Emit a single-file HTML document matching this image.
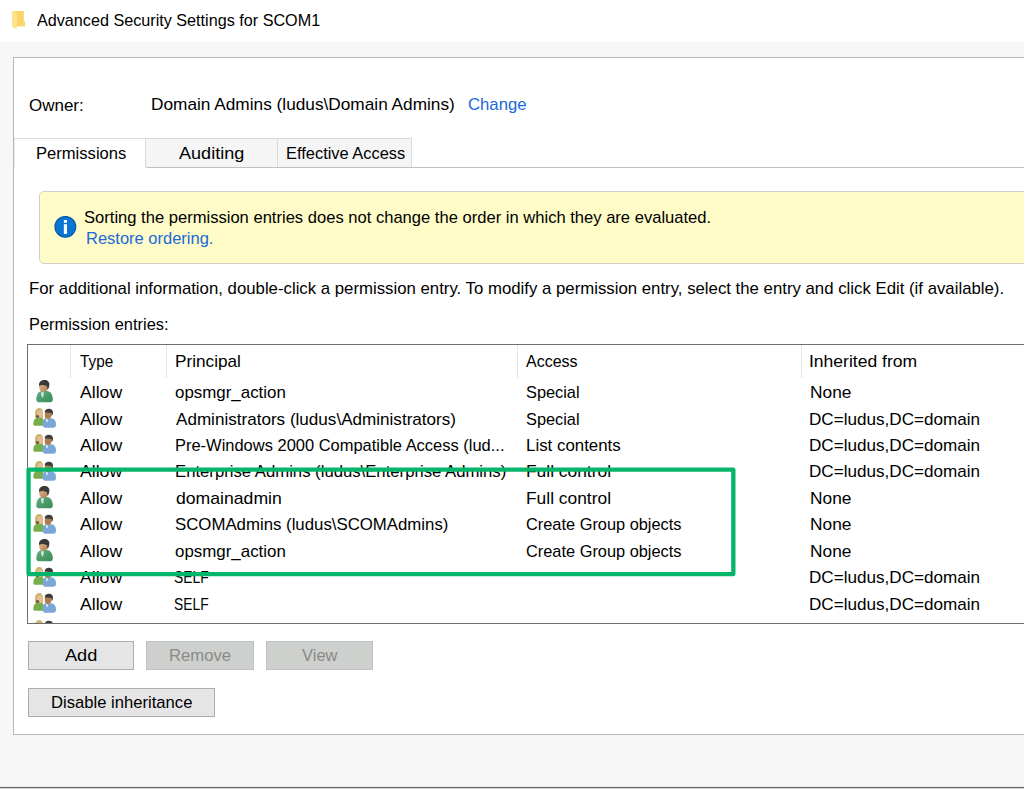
<!DOCTYPE html>
<html><head><meta charset="utf-8">
<style>
html,body{margin:0;padding:0;}
body{width:1024px;height:791px;overflow:hidden;position:relative;background:#f7f7f7;font-family:"Liberation Sans",sans-serif;color:#000;}
.a{position:absolute;}
.t{position:absolute;white-space:nowrap;font-size:17px;line-height:20px;transform-origin:0 0;}
.lnk{color:#1a6ad8;}
#titlebar{left:0;top:0;width:1024px;height:42px;background:#fff;}
#panel{left:13px;top:57px;width:1020px;height:678px;background:#fff;border:1px solid #b4b9b4;box-sizing:border-box;}
.tab{position:absolute;top:138px;height:30px;box-sizing:border-box;border-top:1px solid #dadada;}
#yellow{left:39px;top:191px;width:1000px;height:73px;background:#fffcc8;border:1px solid #d0d0c8;border-radius:5px;box-sizing:border-box;}
#list{left:27px;top:344px;width:1010px;height:280px;background:#fff;border:1px solid #6e6e6e;box-sizing:border-box;overflow:hidden;}
.sep{position:absolute;top:345px;width:1px;height:33px;background:#e5e5e5;}
.btn{position:absolute;box-sizing:border-box;border:1px solid #adadad;background:#e5e5e5;}
.dis{background:#cdd0cd;border-color:#bfc3bf;}
.dtxt{color:#8a8a8a;}
</style></head><body>
<svg width="0" height="0" style="position:absolute">
 <defs>
  <linearGradient id="gb" x1="0" y1="0" x2="1" y2="1"><stop offset="0" stop-color="#62ae7e"/><stop offset="1" stop-color="#3a8a5a"/></linearGradient>
  <linearGradient id="sk" x1="0" y1="0" x2="1" y2="1"><stop offset="0" stop-color="#e4bc93"/><stop offset="1" stop-color="#b27c4e"/></linearGradient>
  <symbol id="usr" viewBox="0 0 17 23">
   <path d="M0.3,19.5 C0.3,14.5 2.5,11.5 6,11 L11,11 C14.5,11.5 16.8,14.5 16.8,19.5 C16.8,21.5 15.5,22.3 13.5,22.3 L3.5,22.3 C1.5,22.3 0.3,21.5 0.3,19.5Z" fill="url(#gb)"/>
   <polygon points="5,12 8,12.5 7,18 5.3,16" fill="#cfe6e6"/>
   <ellipse cx="7.5" cy="7" rx="4.4" ry="4.9" fill="url(#sk)"/>
   <path d="M3,5 C3,1.5 5.5,0 8.5,0 C11.5,0 13.5,1.8 13.4,4.5 C13.3,7 12.5,9 11.5,10 L11,6 C9,5.5 6,4 3.3,6 Z" fill="#3a3a3a"/>
  </symbol>
  <symbol id="grp" viewBox="0 0 23 20">
   <path d="M0.3,16 C0.3,12 2,10 4.5,9.8 L9,9.8 C10,10.5 10.5,12 10.5,17.7 L2,17.7 C0.8,17.7 0.3,17 0.3,16 Z" fill="#76ae4a"/>
   <path d="M2,6 C2,2 3.8,0 6.3,0 C8.8,0 10,2 10,5 L10,10 L3,10 C2.3,9 2,8 2,6Z" fill="#cbb56e"/>
   <ellipse cx="7" cy="6.2" rx="2.9" ry="3.8" fill="#e6bd96"/>
   <ellipse cx="4.5" cy="8.5" rx="1.8" ry="1.5" fill="#7b5b36"/>
   <path d="M9.5,15 C9.5,12 11,10.3 13.5,10.3 L18.5,10.3 C21.5,10.8 23,13 23,16.5 C23,18.8 22,19.7 20,19.7 L12,19.7 C10.5,19.7 9.5,18 9.5,15Z" fill="#7ba7d6"/>
   <polygon points="13,11 15,11.5 14.5,14.5 13.2,13.5" fill="#dcefff"/>
   <ellipse cx="15" cy="7" rx="3.3" ry="4" fill="#b37c4c"/>
   <path d="M11.8,4.3 C11.8,1.5 14,0.7 16,0.7 C18.5,0.7 20,2.2 20,4.5 C20,6.5 19.3,7.5 18.7,8.2 L18.2,5 C16,4.5 13.5,4 11.8,4.8Z" fill="#3c3c3c"/>
  </symbol>
 </defs>
</svg>
<div class="a" id="titlebar"></div>
<!-- folder icon -->
<svg class="a" style="left:12px;top:11px" width="14" height="19" viewBox="0 0 14 19">
  <rect x="1.5" y="0" width="10.3" height="15.4" fill="#f8d46a"/>
  <rect x="11.5" y="9.9" width="1.6" height="5.5" fill="#fbd972"/>
  <polygon points="0,0 2.2,0 4.8,3.2 4.8,18 0,16" fill="#fce48c"/>
</svg>

<div class="a" id="panel"></div>

<!-- tabs -->
<div class="a" style="left:14px;top:138px;width:398px;height:1px;background:#dadada"></div>
<div class="a" style="left:146px;top:167px;width:878px;height:1px;background:#bfc3bf"></div>
<div class="a" style="left:14px;top:139px;width:1px;height:29px;background:#ececec"></div>
<div class="a" style="left:145px;top:139px;width:132px;height:28px;background:#f5f5f5;border-left:1px solid #dadada;box-sizing:border-box"></div>
<div class="a" style="left:277px;top:139px;width:135px;height:28px;background:#f5f5f5;border-left:1px solid #dadada;border-right:1px solid #dadada;box-sizing:border-box"></div>

<!-- info bar -->
<div class="a" id="yellow"></div>
<svg class="a" style="left:54px;top:216px" width="23" height="23" viewBox="0 0 23 23">
  <circle cx="11.35" cy="10.85" r="10.4" fill="#0a76d4" stroke="#0657a8" stroke-width="1.1"/>
  <rect x="9.85" y="4" width="3.15" height="2.8" fill="#fff"/>
  <rect x="9.85" y="8.2" width="3.15" height="9.7" fill="#fff"/>
</svg>


<!-- list -->
<div class="a" id="list"></div>
<div class="sep" style="left:70px"></div>
<div class="sep" style="left:166px"></div>
<div class="sep" style="left:517px"></div>
<div class="sep" style="left:801px"></div>


<!-- buttons -->
<div class="btn" style="left:28px;top:641px;width:106px;height:29px"></div>
<div class="btn dis" style="left:146px;top:641px;width:108px;height:29px"></div>
<div class="btn dis" style="left:266px;top:641px;width:107px;height:29px"></div>
<div class="btn" style="left:28px;top:688px;width:187px;height:29px"></div>

<div class="a" style="left:0;top:786px;width:1024px;height:1px;background:#e6e6e6"></div>
<div class="a" style="left:0;top:787px;width:1024px;height:1px;background:#6d6d6d"></div>
<div class="a" style="left:0;top:788px;width:1024px;height:1px;background:#d0d0d0"></div>
<div class="a" style="left:0;top:789px;width:1024px;height:2px;background:#fff"></div>

<div class="t" id="title" style="left:36.93px;top:11px;transform:scaleX(0.9513)">Advanced Security Settings for SCOM1</div>
<div class="t" id="owner" style="left:29.01px;top:96px;transform:scaleX(0.9983)">Owner:</div>
<div class="t" id="domain" style="left:150.76px;top:95px;transform:scaleX(1.0144)">Domain Admins (ludus\Domain Admins)</div>
<div class="t lnk" id="change" style="left:468.11px;top:95px;transform:scaleX(0.9833)">Change</div>
<div class="t" id="tperm" style="left:35.66px;top:144px;transform:scaleX(0.9754)">Permissions</div>
<div class="t" id="taud" style="left:179.25px;top:144px;transform:scaleX(1.0639)">Auditing</div>
<div class="t" id="teff" style="left:285.84px;top:144px;transform:scaleX(0.9662)">Effective Access</div>
<div class="t" id="sort" style="left:83.76px;top:208px;transform:scaleX(0.9745)">Sorting the permission entries does not change the order in which they are evaluated.</div>
<div class="t lnk" id="restore" style="left:86.16px;top:229px;transform:scaleX(0.9698)">Restore ordering.</div>
<div class="t" id="forinfo" style="left:29.11px;top:279px;transform:scaleX(0.9866)">For additional information, double-click a permission entry. To modify a permission entry, select the entry and click Edit (if available).</div>
<div class="t" id="pent" style="left:29.15px;top:315px;transform:scaleX(0.9653)">Permission entries:</div>
<div class="t" id="hType" style="left:80.45px;top:352px;transform:scaleX(0.8991)">Type</div>
<div class="t" id="hPrin" style="left:175.01px;top:352px;transform:scaleX(1.0112)">Principal</div>
<div class="t" id="hAcc" style="left:526.45px;top:352px;transform:scaleX(0.9420)">Access</div>
<div class="t" id="hInh" style="left:809.31px;top:352px;transform:scaleX(1.0302)">Inherited from</div>
<div class="t" id="add" style="left:64.75px;top:646px;transform:scaleX(1.0692)">Add</div>
<div class="t dtxt" id="remove" style="left:168.85px;top:646px;transform:scaleX(0.9808)">Remove</div>
<div class="t dtxt" id="view" style="left:302.45px;top:646px;transform:scaleX(0.9710)">View</div>
<div class="t" id="disable" style="left:50.82px;top:693px;transform:scaleX(0.9778)">Disable inheritance</div>
<div class="a" id="rows" style="left:28px;top:345px;width:996px;height:278px;overflow:hidden">
<svg class="a" style="left:8px;top:35px" width="17" height="23"><use href="#usr"/></svg>
<svg class="a" style="left:5px;top:63px" width="23" height="20"><use href="#grp"/></svg>
<svg class="a" style="left:5px;top:89px" width="23" height="20"><use href="#grp"/></svg>
<svg class="a" style="left:5px;top:116px" width="23" height="20"><use href="#grp"/></svg>
<svg class="a" style="left:8px;top:141px" width="17" height="23"><use href="#usr"/></svg>
<svg class="a" style="left:5px;top:169px" width="23" height="20"><use href="#grp"/></svg>
<svg class="a" style="left:8px;top:194px" width="17" height="23"><use href="#usr"/></svg>
<svg class="a" style="left:5px;top:222px" width="23" height="20"><use href="#grp"/></svg>
<svg class="a" style="left:5px;top:248px" width="23" height="20"><use href="#grp"/></svg>
<svg class="a" style="left:5px;top:275px" width="23" height="20"><use href="#grp"/></svg>
<div class="t" id="r0allow" style="left:51.61px;top:38px;transform:scaleX(1.0385)">Allow</div>
<div class="t" id="r0p" style="left:146.75px;top:38px;transform:scaleX(0.9941)">opsmgr_action</div>
<div class="t" id="r0a" style="left:498.16px;top:38px;transform:scaleX(0.9610)">Special</div>
<div class="t" id="r0i" style="left:782.35px;top:38px;transform:scaleX(1.0182)">None</div>
<div class="t" id="r1allow" style="left:51.61px;top:65px;transform:scaleX(1.0385)">Allow</div>
<div class="t" id="r1p" style="left:148.10px;top:65px;transform:scaleX(1.0046)">Administrators (ludus\Administrators)</div>
<div class="t" id="r1a" style="left:498.16px;top:65px;transform:scaleX(0.9610)">Special</div>
<div class="t" id="r1i" style="left:781.26px;top:65px;transform:scaleX(1.0061)">DC=ludus,DC=domain</div>
<div class="t" id="r2allow" style="left:51.61px;top:91px;transform:scaleX(1.0385)">Allow</div>
<div class="t" id="r2p" style="left:147.10px;top:91px;transform:scaleX(0.9686)">Pre-Windows 2000 Compatible Access (lud...</div>
<div class="t" id="r2a" style="left:498.04px;top:91px;transform:scaleX(0.9924)">List contents</div>
<div class="t" id="r2i" style="left:781.26px;top:91px;transform:scaleX(1.0061)">DC=ludus,DC=domain</div>
<div class="t" id="r3allow" style="left:51.61px;top:117px;transform:scaleX(1.0385)">Allow</div>
<div class="t" id="r3p" style="left:147.10px;top:117px;transform:scaleX(0.9821)">Enterprise Admins (ludus\Enterprise Admins)</div>
<div class="t" id="r3a" style="left:498.03px;top:117px;transform:scaleX(1.0225)">Full control</div>
<div class="t" id="r3i" style="left:781.26px;top:117px;transform:scaleX(1.0061)">DC=ludus,DC=domain</div>
<div class="t" id="r4allow" style="left:51.61px;top:144px;transform:scaleX(1.0385)">Allow</div>
<div class="t" id="r4p" style="left:147.52px;top:144px;transform:scaleX(1.0368)">domainadmin</div>
<div class="t" id="r4a" style="left:498.03px;top:144px;transform:scaleX(1.0225)">Full control</div>
<div class="t" id="r4i" style="left:782.35px;top:144px;transform:scaleX(1.0182)">None</div>
<div class="t" id="r5allow" style="left:51.61px;top:170px;transform:scaleX(1.0385)">Allow</div>
<div class="t" id="r5p" style="left:147.07px;top:170px;transform:scaleX(0.9878)">SCOMAdmins (ludus\SCOMAdmins)</div>
<div class="t" id="r5a" style="left:498.13px;top:170px;transform:scaleX(0.9624)">Create Group objects</div>
<div class="t" id="r5i" style="left:782.35px;top:170px;transform:scaleX(1.0182)">None</div>
<div class="t" id="r6allow" style="left:51.61px;top:197px;transform:scaleX(1.0385)">Allow</div>
<div class="t" id="r6p" style="left:146.75px;top:197px;transform:scaleX(0.9941)">opsmgr_action</div>
<div class="t" id="r6a" style="left:498.13px;top:197px;transform:scaleX(0.9624)">Create Group objects</div>
<div class="t" id="r6i" style="left:782.35px;top:197px;transform:scaleX(1.0182)">None</div>
<div class="t" id="r7allow" style="left:51.61px;top:223px;transform:scaleX(1.0385)">Allow</div>
<div class="t" id="r7p" style="left:146.32px;top:223px;transform:scaleX(0.8144)">SELF</div>
<div class="t" id="r7i" style="left:781.26px;top:223px;transform:scaleX(1.0061)">DC=ludus,DC=domain</div>
<div class="t" id="r8allow" style="left:51.61px;top:250px;transform:scaleX(1.0385)">Allow</div>
<div class="t" id="r8p" style="left:146.32px;top:250px;transform:scaleX(0.8144)">SELF</div>
<div class="t" id="r8i" style="left:781.26px;top:250px;transform:scaleX(1.0061)">DC=ludus,DC=domain</div>
<div class="t" id="r9allow" style="left:51.61px;top:276px;transform:scaleX(1.0385)">Allow</div>
<div class="t" id="r9p" style="left:146.32px;top:276px;transform:scaleX(0.8144)">SELF</div>
<div class="t" id="r9i" style="left:781.26px;top:276px;transform:scaleX(1.0061)">DC=ludus,DC=domain</div>
</div>
<!-- green highlight -->
<svg class="a" style="left:0;top:0" width="1024" height="791"><rect x="28.55" y="469.65" width="704.8" height="104.4" fill="none" stroke="#05b569" stroke-width="4.3" stroke-linejoin="round"/></svg>


</body></html>
